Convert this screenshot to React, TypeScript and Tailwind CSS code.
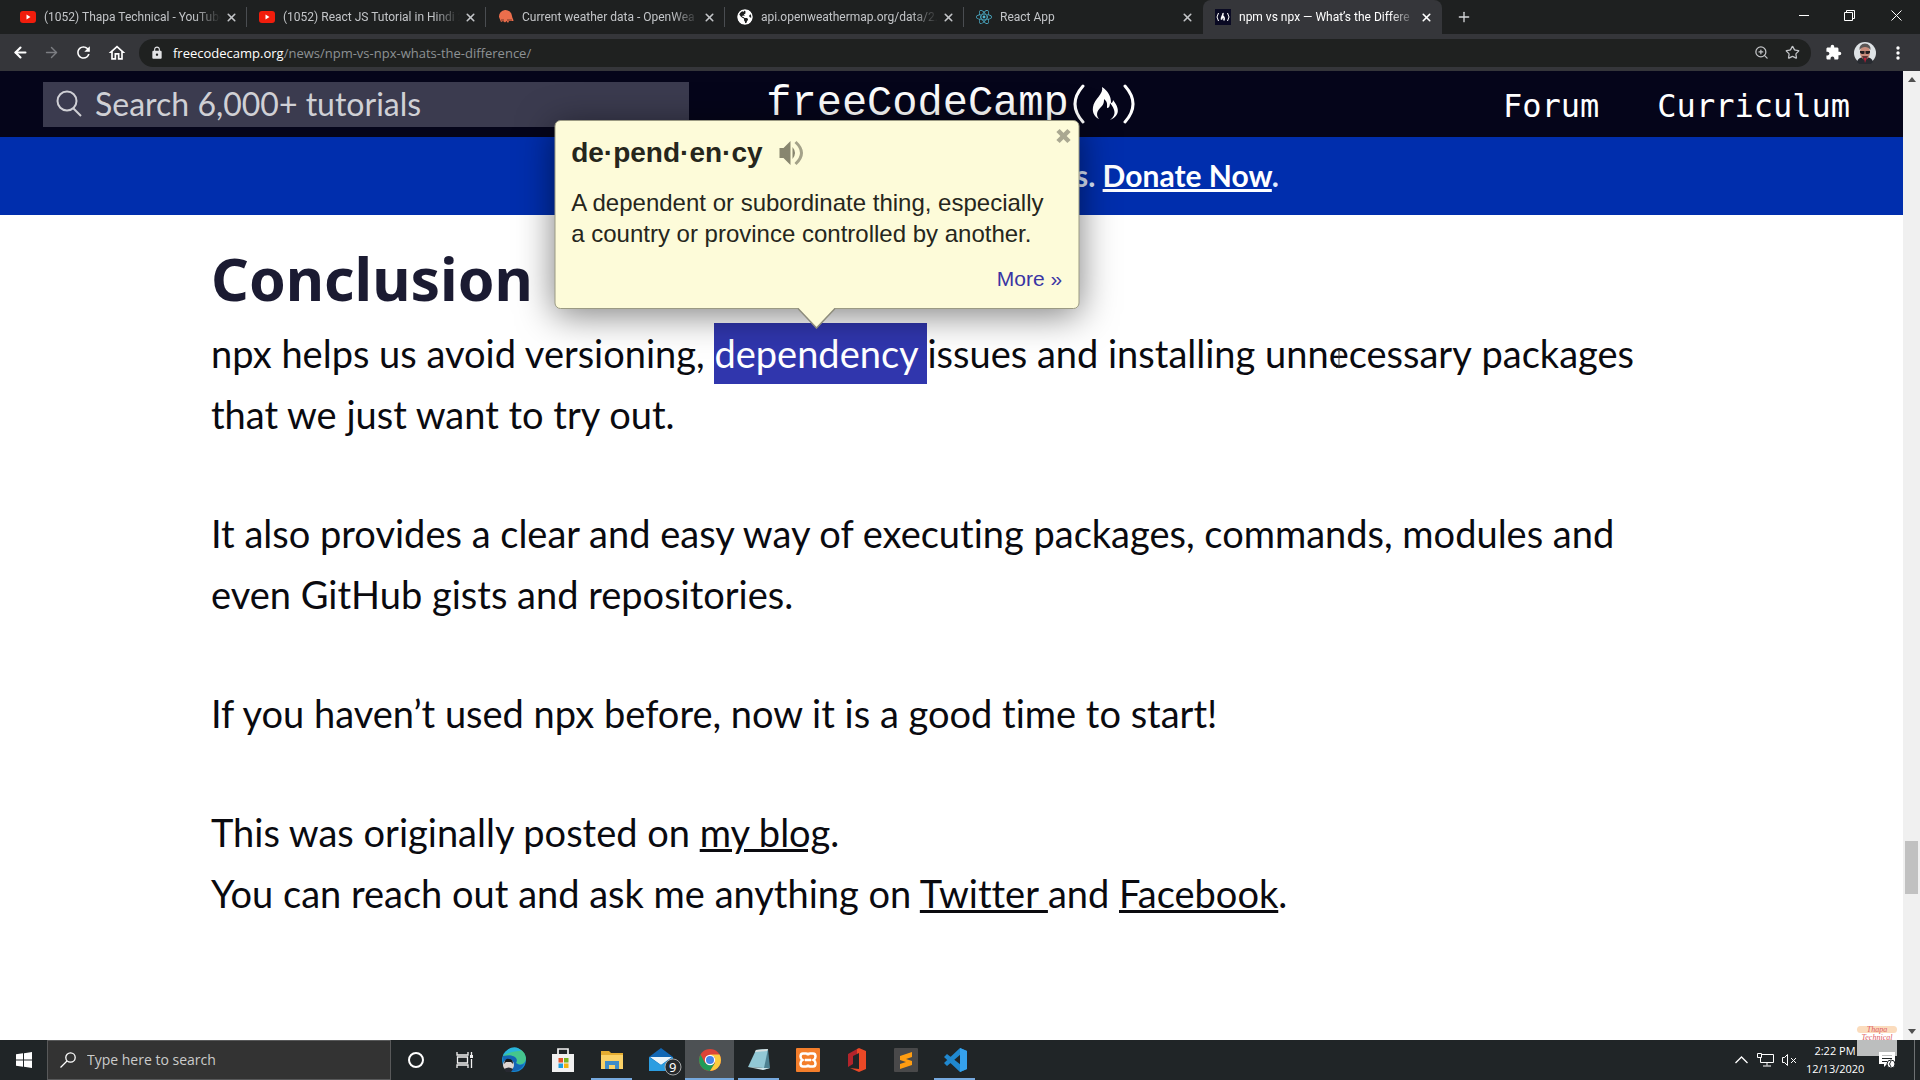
import React from "react";
import { ArrowLeft, ArrowRight, X, Plus, Star, ZoomIn } from "lucide-react";
import { MdExtension, MdLock, MdOutlineHome, MdRefresh } from "react-icons/md";
import { FaGlobeAmericas, FaReact } from "react-icons/fa";

const YouTubeIcon = () => (
  <svg viewBox="0 0 16 16" className="size-4"><rect y="2" width="16" height="12" rx="3" fill="#f11d0c" /><path d="M6.500 5.500v5l4-2.500z" fill="#fff" /></svg>
);
const WeatherIcon = () => (
  <svg viewBox="0 0 16 16" className="size-4"><path d="M1 8a6.500 6.500 0 0 1 13-1c0 2 1.500 3 1.500 5H11l-1 2-1.500-2-1.500 1.500L5 12 3 13z" fill="#ec6e4c" /><path d="M9 11h5M3 11h3" stroke="#7c3a29" /></svg>
);
const FccIcon = () => (
  <span className="flex size-4 items-center justify-center bg-[#0a0a23] text-white">
    <svg viewBox="0 0 16 16" className="size-4" fill="none" stroke="#fff"><path d="M3.500 4q-3 4 0 8M12.500 4q3 4 0 8" /><path d="M8 4c.5 2-2 4-1.500 6.500.5-2 1.500-2 1.500-3.500 1.500 1.500 1.500 3 .8 4.500" strokeWidth="1.500" /></svg>
  </span>
);

const tabs = [
  { title: "(1052) Thapa Technical - YouTube", icon: <YouTubeIcon /> },
  { title: "(1052) React JS Tutorial in Hindi 2", icon: <YouTubeIcon /> },
  { title: "Current weather data - OpenWea", icon: <WeatherIcon /> },
  { title: "api.openweathermap.org/data/2.", icon: <FaGlobeAmericas className="size-4 rounded-full text-white" /> },
  { title: "React App", icon: <FaReact className="size-4 text-[#4fb6d3]" /> },
  { title: "npm vs npx — What’s the Differe", icon: <FccIcon />, active: true },
];

function TabStrip() {
  return (
    <div className="flex h-[34px] bg-[#1e2020] pl-2">
      <div className="flex" role="tablist">
        {tabs.map((t, i) => (
          <div
            key={t.title}
            className={
              t.active
                ? "flex w-[239px] items-center gap-1 rounded-t-lg bg-[#35363a] pr-2 pl-3 text-white"
                : "flex w-[239px] items-center gap-1 pr-2 pl-3 text-[#c3c5c8]"
            }
          >
            <button role="tab" aria-selected={!!t.active} className="flex min-w-0 flex-1 items-center gap-2">
              <span className="shrink-0">{t.icon}</span>
              <span className="min-w-0 flex-1 overflow-hidden text-left font-[Roboto] text-[12px] leading-4 whitespace-nowrap mask-r-from-85%">{t.title}</span>
            </button>
            <button aria-label="Close tab"><X className="size-[13px]" strokeWidth={3} /></button>
            <span className={i < 4 ? "-mr-2 ml-1 h-5 w-px bg-[#4a4d51]" : "-mr-2 ml-1 w-px"} />
          </div>
        ))}
      </div>
      <button aria-label="New tab" className="ml-3.5 self-center text-[#d5d7da]"><Plus className="size-4" strokeWidth={2} /></button>
      <div className="ml-auto flex w-[139px] items-center justify-around pb-1 text-white">
        <button aria-label="Minimize"><svg viewBox="0 0 10 10" className="size-[10px]"><path d="M0 5.500h10" stroke="currentColor" /></svg></button>
        <button aria-label="Restore"><svg viewBox="0 0 11 11" className="size-[11px]" fill="none" stroke="currentColor"><path d="M.5 2.500h8v8h-8zM2.500 2.500v-2h8v8h-2" /></svg></button>
        <button aria-label="Close window"><svg viewBox="0 0 11 11" className="size-[11px]" fill="none" stroke="currentColor"><path d="M.5.5l10 10M10.500.5l-10 10" /></svg></button>
      </div>
    </div>
  );
}

function Avatar() {
  return (
    <svg viewBox="0 0 22 22" className="size-[22px]">
      <circle cx="11" cy="11" r="11" fill="#dfe3e6" />
      <path d="M3 20q1-5 8-5t8 5a11 11 0 0 1-16 0z" fill="#272a30" />
      <ellipse cx="11" cy="10.500" rx="5" ry="7" fill="#c98d7c" />
      <path d="M5.500 8Q5 2 11 1.500 17 2 16.500 8q-2-3-5.500-3T5.500 8z" fill="#5b5756" />
      <path d="M6 9h4.500v2.500q-3 1.500-4.500-1zM11.500 9H16v1.500q-1.500 2.500-4.500 1z" fill="#231d20" />
      <path d="M8 14h6l-1.500 4h-3z" fill="#5f3436" /><path d="M10 16l1 5 1.500-5z" fill="#c3203b" />
    </svg>
  );
}

function Toolbar() {
  return (
    <div className="flex h-[37px] items-center bg-[#35363a] pr-5 pl-3 text-white">
      <div className="flex w-[127px] items-center gap-[14px]">
        <button aria-label="Back"><ArrowLeft className="size-[17px]" strokeWidth={3} /></button>
        <button aria-label="Forward" className="text-[#7c7e82]"><ArrowRight className="size-[17px]" strokeWidth={2} /></button>
        <button aria-label="Reload"><MdRefresh className="size-[19px]" /></button>
        <button aria-label="Home"><MdOutlineHome className="size-5" /></button>
      </div>
      <div className="flex h-7 flex-1 items-center rounded-full bg-[#1f2120] px-[11px]">
        <MdLock className="size-3.5 text-[#e2e3e5]" />
        <div className="ml-[9px] flex-1 text-[13px] leading-4 text-[#8d9194]"><span className="text-white">freecodecamp.org</span>/news/npm-vs-npx-whats-the-difference/</div>
        <button aria-label="Zoom" className="text-[#c3c5c8]"><ZoomIn className="size-[15px]" /></button>
        <button aria-label="Bookmark" className="ml-4 text-[#c3c5c8]"><Star className="size-[15px]" /></button>
      </div>
      <button aria-label="Extensions" className="ml-3.5"><MdExtension className="size-[17px]" /></button>
      <button aria-label="Profile" className="ml-3"><Avatar /></button>
      <button aria-label="Menu" className="ml-5"><svg viewBox="0 0 4 16" className="h-4 w-1" fill="#fff"><circle cx="2" cy="3" r="1.700" /><circle cx="2" cy="8" r="1.700" /><circle cx="2" cy="13" r="1.700" /></svg></button>
    </div>
  );
}

function SiteNav() {
  return (
    <nav className="grid h-[66px] grid-cols-[1fr_auto_1fr] items-center bg-[#05051a] pr-[53px] pl-[43px] text-white">
      <label className="flex h-[45px] w-[646px] items-center bg-[#3b3b4f] pl-3 text-[#d0d0d5]">
        <svg viewBox="0 0 28 28" className="size-7" fill="none" stroke="currentColor" strokeWidth="2"><circle cx="12" cy="11" r="9.500" /><path d="M18 18l8 8" /></svg>
        <input aria-label="Search tutorials" placeholder="Search 6,000+ tutorials" className="ml-3 min-w-0 flex-1 bg-transparent font-[Lato] text-[32px] leading-10 outline-none placeholder:text-[#d0d0d5]" />
      </label>
      <a href="#home" className="flex h-[58px] items-start pl-2 font-['Liberation_Mono'] text-[42px] leading-[58px]">
        freeCodeCamp
        <svg viewBox="0 0 62 44" className="mt-[7px] ml-1 h-[44px] w-[62px]" fill="none" stroke="#fff" strokeWidth="3" strokeLinecap="round">
          <path d="M10 4Q-6 22 10 40M52 4q16 18 0 36" />
          <path d="M29 5c2 7-8 12-9 20-1 6 2 10 6 12-4-5-1-9 2-12 3-3 3-5 3-8 4 3 3 6 3 9 2 0 3-2 3-5 5 6 7 12 0 17 12-5 8-14 3-20 0 2-1 3-2 3 0-7-3-12-9-16z" fill="#fff" stroke="none" />
        </svg>
      </a>
      <div className="flex justify-end gap-[58px] pt-1 font-['DejaVu_Sans_Mono'] text-[32px] leading-10">
        <a href="#forum">Forum</a>
        <a href="#curriculum">Curriculum</a>
      </div>
    </nav>
  );
}

function DictionaryPopup() {
  return (
    <aside className="absolute bottom-full left-[48%] mb-3.5 h-[189px] w-[525px] -translate-x-1/2 rounded-md border border-[#9b9a83] bg-[#fdfbd9] px-4 font-['Liberation_Sans'] text-[#26261c] shadow-[0_6px_36px_rgba(0,0,0,0.5)]">
      <button aria-label="Close definition" className="absolute top-1 right-1 text-[#aaa891]"><X className="size-[22px]" strokeWidth={5} strokeLinecap="butt" /></button>
      <div className="flex items-center gap-4 pt-4">
        <b className="text-[28px] leading-8">de·pend·en·cy</b>
        <button aria-label="Listen">
          <svg viewBox="0 0 26 26" className="size-[26px]" fill="none"><path d="M1 8h4l7-7v24l-7-7H1z" fill="#88866f" /><path d="M14 7q5 6 0 12" fill="#88866f" /><path d="M17 2q12 11 0 22" stroke="#a4a289" strokeWidth="3" /></svg>
        </button>
      </div>
      <p className="mt-[18px] text-[24px] leading-[31px]">A dependent or subordinate thing, especially<br />a country or province controlled by another.</p>
      <div className="mt-[18px] text-right text-[21px] leading-6"><a href="#more" className="text-[#3a35a4]">More »</a></div>
      <svg viewBox="0 0 38 21" className="absolute top-full left-1/2 h-[21px] w-[38px] -translate-x-1/2"><path d="M0-2v2l19 20L38 0v-2z" fill="#fdfbd9" /><path d="M0 0l19 20L38 0" fill="none" stroke="#8d8c7c" strokeWidth="1.500" /></svg>
    </aside>
  );
}

function Article() {
  return (
    <article className="flex-1 pt-[26px] pr-20 pl-[211px] font-[Lato] text-[38px] leading-[61px] text-[#0a0a0f] [font-variant-ligatures:none]">
      <h1 className="font-['Noto_Sans'] text-[59px] leading-[74px] font-bold text-[#1b1b32]">Conclusion</h1>
      <div className="flex flex-col gap-[58px] pt-2">
        <p>
          npx helps us avoid versioning,{" "}
          <span className="relative inline-block bg-[#3036ad] text-white"><span className="whitespace-pre">dependency </span><DictionaryPopup /></span>
          issues and installing{" "}
          <span className="relative">
            unnecessary
            <svg viewBox="0 0 8 18" className="absolute top-5 left-[34%] h-[18px] w-2" fill="none" stroke="#333"><path d="M1 .5h2l1 1 1-1h2M4 1v16M1 17.500h2l1-1 1 1h2" /></svg>
          </span>{" "}
          packages<br />that we just want to try out.
        </p>
        <p>It also provides a clear and easy way of executing packages, commands, modules and<br />even GitHub gists and repositories.</p>
        <p>If you haven’t used npx before, now it is a good time to start!</p>
        <p>
          This was originally posted on <a href="#blog" className="underline">my blog</a>.<br />
          You can reach out and ask me anything on <a href="#twitter" className="underline">Twitter </a>and <a href="#facebook" className="underline">Facebook</a>.
        </p>
      </div>
    </article>
  );
}

function ScrollBar() {
  return (
    <div className="flex w-[17px] flex-col items-center bg-[#f0f0f0] py-1">
      <svg viewBox="0 0 8 8" className="size-2"><path d="M0 7l4-5 4 5z" fill="#505050" /></svg>
      <div className="grow-[758]" />
      <div className="h-[53px] w-[13px] bg-[#c1c1c1]" />
      <div className="grow-[134]" />
      <svg viewBox="0 0 8 8" className="size-2"><path d="M0 1l4 5 4-5z" fill="#505050" /></svg>
    </div>
  );
}

const apps = [
  { name: "Cortana", state: "", art: <circle cx="12" cy="12" r="7" fill="none" stroke="#fff" strokeWidth="2" /> },
  { name: "Task view", state: "", art: <g fill="none" stroke="#f1f1f1" strokeWidth="1.300"><path d="M4 4v3h11V4M4 20v-3h11v3M4.500 9h10v6h-10zM18.500 4v3M18.500 11v9" /><path d="M17 8.500h3" strokeWidth="3" /></g> },
  { name: "Edge", state: "", art: <g><circle cx="12" cy="12" r="12" fill="#1687cf" /><path d="M1 8C5-2 22-3 24 10c0 6-6 8-10 5 3-6-4-9-13-7z" fill="#45c58d" /><path d="M1 8C5-2 16-3 19 3 14 3 6 4 1 8z" fill="#29b5dc" /><path d="M1 8c9-2 16 1 13 7 2 2 5 3 8 1-3 8-15 10-20 2z" fill="#1464b4" /><circle cx="6.500" cy="17" r="5.500" fill="#ded5d2" /><path d="M2 16q1-6 5-5 4 0 4 5l-2-2H4z" fill="#171719" /><path d="M2 21q5-3 9 0l-2 3H4z" fill="#272931" /></g> },
  { name: "Microsoft Store", state: "", art: <g><path d="M7 6V1h10v5" fill="none" stroke="#f4f4f4" strokeWidth="1.700" /><path d="M1 6h22v18H1z" fill="#f1f1f1" /><path d="M7.500 10H12v4.500H7.500z" fill="#e5532b" /><path d="M13 10h4.500v4.500H13z" fill="#78b51f" /><path d="M7.500 15.500H12V20H7.500z" fill="#1d9fe0" /><path d="M13 15.500h4.500V20H13z" fill="#f3b50f" /></g> },
  { name: "File Explorer", state: "open", art: <g><path d="M1 3h8l2 2h12v16H1z" fill="#e5ad31" /><path d="M1 7h22v14H1z" fill="#fbd267" /><path d="M5 21v-8h14v8h-4v-4H9v4z" fill="#3f8cc8" /></g> },
  { name: "Mail", state: "", art: <g><path d="M0 9L12 0l12 9v14H0z" fill="#1267b4" /><path d="M1 9h22l-11 8z" fill="#edf5fa" /><path d="M0 9l12 8 12-8v14H0z" fill="#2b9de1" /><circle cx="24" cy="19" r="8" fill="#25292c" stroke="#a5a7a8" /><text x="20" y="24" fontSize="13" fill="#fff" fontFamily="Noto Sans">9</text></g> },
  { name: "Chrome", state: "active", art: <g><circle cx="12" cy="12" r="11" fill="#dc4337" /><path d="M2.500 6.500A11 11 0 0 0 12 23l5-8-5 2-5-2z" fill="#209b58" /><path d="M12 23A11 11 0 0 0 21.500 6.500H12l5 3v5.500z" fill="#fccc3e" /><circle cx="12" cy="12" r="5.200" fill="#fff" /><circle cx="12" cy="12" r="4" fill="#4583e8" /></g> },
  { name: "Notepad", state: "open", art: <g><path d="M9 2l12-1 2 19-7 2z" fill="#4d8191" /><path d="M9 2l12-1-4 19-16-1z" fill="#92c8d5" /><path d="M1 19l16 1 6 0-7 2z" fill="#cfe5e9" /><path d="M9 2l12-1-1 2-12 1z" fill="#d8dfdf" /></g> },
  { name: "XAMPP", state: "", art: <g><rect width="24" height="24" rx="1" fill="#f47e2b" /><path d="M7 5.500h3q2 0 2 2 0-2 2-2h3q2.500 0 2.500 3 0 2.500-2 3.500 2 1 2 3.500 0 3-2.500 3h-3q-2 0-2-2 0 2-2 2H7q-2.500 0-2.500-3 0-2.500 2-3.500-2-1-2-3.500 0-3 2.500-3zM9 12h6" fill="none" stroke="#fff" strokeWidth="2.500" /></g> },
  { name: "Office", state: "", art: <g><path d="M3 6l9-5v5l-4 2v8l-5 3z" fill="#b3242b" /><path d="M12 1l2-1 7 3v18l-7 3-9-4 9 1V5l-2 1z" fill="#eb4826" /></g> },
  { name: "Sublime Text", state: "", art: <g><rect width="24" height="24" rx="1" fill="#49494a" /><path d="M6 8l12-4v5l-6 2 6 2v4L6 21v-5l6-2-6-2z" fill="#ff9d11" /></g> },
  { name: "Visual Studio Code", state: "open", art: <g><path d="M17 0l7 3v18l-7 3L1 9l3-3 14 11V6L4 18l-3-3z" fill="#2088cf" /><path d="M17 0l7 3v18l-7 3z" fill="#35a1ec" /></g> },
];

function Taskbar() {
  return (
    <footer className="relative flex h-10 bg-[#202527] text-white">
      <button aria-label="Start" className="flex w-[47px] items-center justify-center"><svg viewBox="0 0 16 16" className="size-4" fill="#fff"><path d="M0 2.300l7-1v6.200H0zM8 1.200L16 0v7.500H8zM0 8.500h7v6.200l-7-1zM8 8.500h8V16l-8-1.200z" /></svg></button>
      <label className="flex w-[344px] items-center gap-[11px] border border-[#58595a] bg-[#333] pl-3">
        <svg viewBox="0 0 16 16" className="size-4" fill="none" stroke="#fff" strokeWidth="1.300"><circle cx="10.500" cy="5.500" r="4.700" /><path d="M7 9L.5 15.500" /></svg>
        <input aria-label="Search Windows" placeholder="Type here to search" className="min-w-0 flex-1 bg-transparent text-[14px] leading-5 outline-none placeholder:text-[#cbcbcb]" />
      </label>
      <div className="flex">
        {apps.map((a) => (
          <button key={a.name} aria-label={a.name} className={a.state === "active" ? "relative flex w-[49px] items-center justify-center bg-[#4d5154]" : "relative flex w-[49px] items-center justify-center"}>
            <svg viewBox="0 0 24 24" className="size-6 overflow-visible">{a.art}</svg>
            {a.state === "active" && <span className="absolute inset-x-0 bottom-0 h-0.5 bg-[#76a9de]" />}
            {a.state === "open" && <span className="absolute inset-x-1 bottom-0 h-0.5 bg-[#76a9de]" />}
          </button>
        ))}
      </div>
      <div className="ml-auto flex items-center">
        <button aria-label="Hidden icons"><svg viewBox="0 0 13 8" className="h-2 w-[13px]" fill="none" stroke="#fff" strokeWidth="1.300"><path d="M.5 7l6-6 6 6" /></svg></button>
        <svg viewBox="0 0 17 14" className="ml-[9px] h-[14px] w-[17px]" fill="none" stroke="#fff"><path d="M5 1.500h11.500v8H3.500V5M10 9.500v3M6 13h8M.5.5h4v4h-4z" /></svg>
        <svg viewBox="0 0 15 14" className="ml-2 h-[14px] w-[15px]" fill="none" stroke="#fff"><path d="M.5 4.500h2l3-3v11l-3-3h-2zM9 5l5 5M14 5l-5 5" /></svg>
        <div className="ml-[9px] w-[58px] text-center text-[11px] leading-[18px] whitespace-nowrap">2:22 PM<br />12/13/2020</div>
        <button aria-label="Notifications" className="ml-[15px]"><svg viewBox="0 0 17 17" className="size-[17px]"><path d="M0 0h16v12H8l-3 3v-3H0z" fill="#fff" /><path d="M3 3.500h10M3 6.500h10M3 9.500h5" stroke="#202527" /><circle cx="12" cy="12" r="4" fill="#fff" stroke="#202527" /><path d="M12 9q-3 3 0 6" stroke="#202527" fill="none" /></svg></button>
        <span className="mr-[5px] ml-[18px] h-10 w-px bg-[#6e7173]" />
      </div>
    </footer>
  );
}

function Watermark() {
  return (
    <div className="pointer-events-none absolute right-[23px] bottom-6 z-10 h-10 w-10 bg-white/70 pt-2.5 text-center font-['Liberation_Serif'] text-[8px] leading-[10px] text-[#dd5a63] italic">
      <div className="rounded-full bg-[#fbdcbd] leading-[7px]">Thapa</div>
      <div>Technical</div>
    </div>
  );
}

export default function App() {
  return (
    <div className="relative flex min-h-screen flex-col overflow-hidden bg-white font-['Open_Sans',sans-serif]">
      <TabStrip />
      <Toolbar />
      <div className="flex flex-1">
        <main className="flex min-w-0 flex-1 flex-col">
          <SiteNav />
          <div className="h-[78px] bg-[#002ead] pl-[1075px] font-[Lato] text-[30px] leading-[76px] font-bold text-[#dfeaff]">
            s. <a href="#donate" className="text-white underline">Donate Now</a>.
          </div>
          <Article />
        </main>
        <ScrollBar />
      </div>
      <Taskbar />
      <Watermark />
    </div>
  );
}
